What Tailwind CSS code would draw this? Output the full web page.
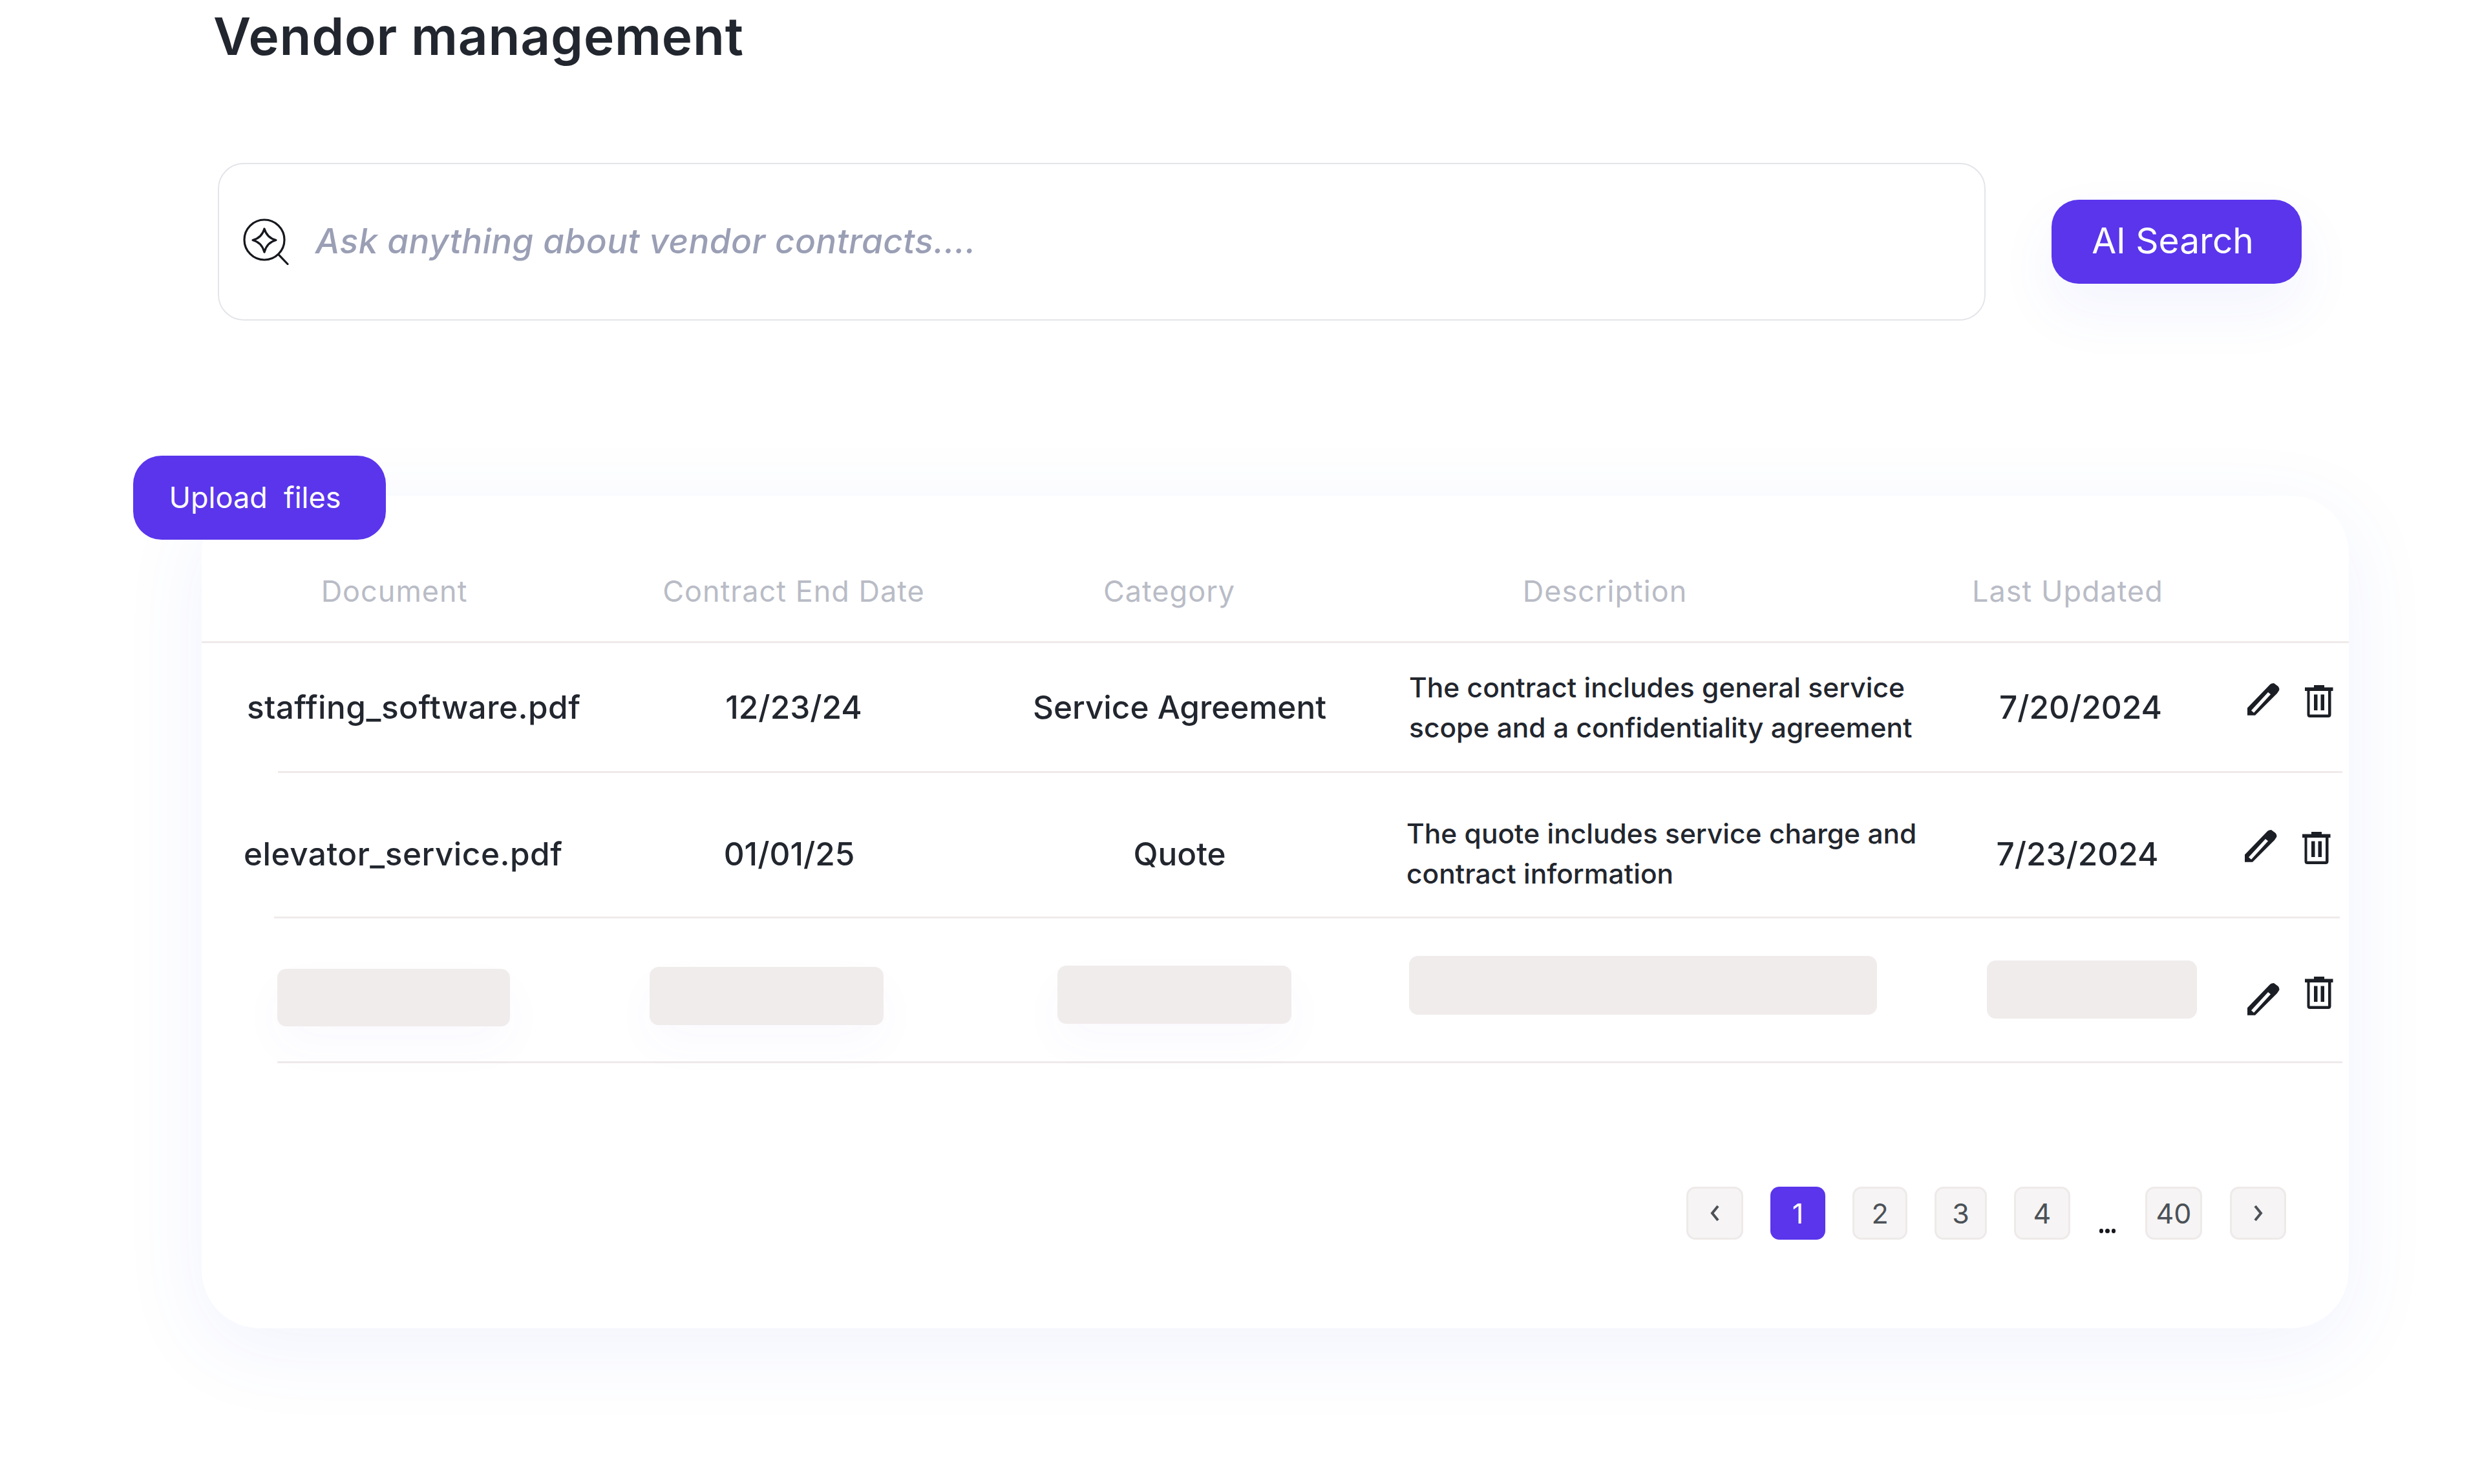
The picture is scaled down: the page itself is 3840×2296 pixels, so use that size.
<!DOCTYPE html>
<html lang="en">
<head>
  <meta charset="UTF-8">
  <title>Vendor management</title>
  <script src="https://cdn.jsdelivr.net/npm/@tailwindcss/browser@4"></script>
</head>
<body class="w-[3840px] h-[2296px] overflow-hidden bg-white font-['Inter',sans-serif] text-[#22262e]">

  <!-- title -->
  <h1 class="ml-[330px] h-[252px] pt-[8px] text-[80px] leading-[96px] font-semibold tracking-[0.8px]">Vendor management</h1>

  <!-- search -->
  <div class="flex items-center h-[244px] ml-[337px]">
    <div class="flex items-center w-[2735px] h-[244px] pl-[36px] border-2 border-[#e4e5ea] rounded-[40px] bg-white">
      <svg class="w-[72px] h-[72px] mr-[41px] shrink-0" viewBox="0 0 72 72" fill="none" stroke="#16181d" stroke-width="3.2" stroke-linecap="round" stroke-linejoin="round">
        <circle cx="34" cy="33" r="31"/>
        <path d="M56.7 56.7L70 70.5"/>
        <path d="M34 16Q38 30 52 33.5Q38 37 34 52Q30 37 16 33.5Q30 30 34 16Z"/>
      </svg>
      <span class="text-[53px] font-medium italic text-[#9a9fb5] tracking-[0.4px]">Ask anything about vendor contracts....</span>
    </div>
    <button class="ml-[102px] w-[387px] h-[130px] rounded-[42px] bg-[#5a35ec] text-white text-[55px] pr-[12px] pb-[4px] shadow-[0_40px_90px_rgba(90,100,240,0.07)]">AI Search</button>
  </div>

  <!-- table card -->
  <div class="relative ml-[312px] mt-[271px] w-[3322px] h-[1288px] rounded-[90px] bg-white shadow-[0_30px_130px_rgba(80,100,230,0.08)]">
    <button class="absolute left-[-106px] top-[-62px] w-[391px] h-[130px] rounded-[44px] bg-[#5a35ec] text-white text-[45px] whitespace-pre pr-[14px]">Upload  files</button>

    <!-- header -->
    <div class="grid grid-cols-[596px_640px_522px_826px_606px] items-center h-[228px] pt-[70px] border-b-[3px] border-[#f0eaeb] text-[45px] tracking-[1px] text-[#b9bcc6] text-center">
      <div>Document</div>
      <div>Contract End Date</div>
      <div>Category</div>
      <div>Description</div>
      <div>Last Updated</div>
    </div>

    <!-- row 1 -->
    <div class="flex items-center h-[198px] pt-[1px] text-[49.5px] font-medium">
      <div class="w-[596px] pl-[70px] whitespace-nowrap tracking-[0.5px]">staffing_software.pdf</div>
      <div class="w-[640px] text-center">12/23/24</div>
      <div class="w-[522px] pl-[32px] text-center whitespace-nowrap">Service Agreement</div>
      <div class="w-[826px] pl-[110px] text-[42.5px] leading-[62px] whitespace-nowrap">The contract includes general service<br>scope and a confidentiality agreement</div>
      <div class="w-[574px] pl-[72px] text-center">7/20/2024</div>
      <div class="flex items-start pl-[7px] gap-[39px] -mt-[22px]">
        <svg class="w-[50px] h-[50px]" viewBox="0 0 50 50" fill="#1b1e24" fill-rule="evenodd"><path d="M0 38.3L35.3 1.7Q37 0 41 0L47.7 5Q50 8 49.3 10.7L46 15.7L12 49.7H0ZM6 42.3L10 45.7L36 17.3L32 14Z"/></svg>
        <svg class="w-[44px] h-[50px] mt-[3px]" viewBox="0 0 44 50" fill="#1b1e24"><path d="M14 0H30V3.5H43.5V9H40.5V45.5Q40.5 50 36 50H8Q3.5 50 3.5 45.5V9H0V3.5H14ZM7.5 9V45.5H36V9ZM14 14.5H19.5V39H14ZM24.5 14.5H30V39H24.5Z"/></svg>
      </div>
    </div>
    <div class="h-[3px] ml-[118px] w-[3194px] bg-[#f0eaeb]"></div>

    <!-- row 2 -->
    <div class="flex items-center h-[222px] pt-[28px] text-[49.5px] font-medium">
      <div class="w-[596px] pl-[65px] whitespace-nowrap tracking-[0.5px]">elevator_service.pdf</div>
      <div class="w-[640px] pr-[14px] text-center">01/01/25</div>
      <div class="w-[522px] pl-[32px] text-center">Quote</div>
      <div class="w-[826px] pl-[106px] text-[42.5px] leading-[62px] whitespace-nowrap">The quote includes service charge and<br>contract information</div>
      <div class="w-[574px] pl-[62px] text-center">7/23/2024</div>
      <div class="flex items-start pl-[3px] gap-[39px] -mt-[22px]">
        <svg class="w-[50px] h-[50px]" viewBox="0 0 50 50" fill="#1b1e24" fill-rule="evenodd"><path d="M0 38.3L35.3 1.7Q37 0 41 0L47.7 5Q50 8 49.3 10.7L46 15.7L12 49.7H0ZM6 42.3L10 45.7L36 17.3L32 14Z"/></svg>
        <svg class="w-[44px] h-[50px] mt-[3px]" viewBox="0 0 44 50" fill="#1b1e24"><path d="M14 0H30V3.5H43.5V9H40.5V45.5Q40.5 50 36 50H8Q3.5 50 3.5 45.5V9H0V3.5H14ZM7.5 9V45.5H36V9ZM14 14.5H19.5V39H14ZM24.5 14.5H30V39H24.5Z"/></svg>
      </div>
    </div>
    <div class="h-[3px] ml-[112px] w-[3196px] bg-[#f0eaeb]"></div>

    <!-- row 3, empty placeholders -->
    <div class="flex items-start h-[221px]">
      <div class="ml-[117px] mt-[78px] w-[360px] h-[89px] rounded-[14px] bg-[#f1ecec] shadow-[0_30px_70px_rgba(90,100,240,0.03)]"></div>
      <div class="ml-[216px] mt-[75px] w-[362px] h-[90px] rounded-[14px] bg-[#f1ecec] shadow-[0_30px_70px_rgba(90,100,240,0.03)]"></div>
      <div class="ml-[269px] mt-[73px] w-[362px] h-[90px] rounded-[14px] bg-[#f1ecec] shadow-[0_30px_70px_rgba(90,100,240,0.03)]"></div>
      <div class="ml-[182px] mt-[58px] w-[724px] h-[91px] rounded-[14px] bg-[#f1ecec]"></div>
      <div class="ml-[170px] mt-[65px] w-[325px] h-[90px] rounded-[14px] bg-[#f1ecec]"></div>
      <svg class="ml-[78px] mt-[100px] w-[50px] h-[50px]" viewBox="0 0 50 50" fill="#1b1e24" fill-rule="evenodd"><path d="M0 38.3L35.3 1.7Q37 0 41 0L47.7 5Q50 8 49.3 10.7L46 15.7L12 49.7H0ZM6 42.3L10 45.7L36 17.3L32 14Z"/></svg>
      <svg class="ml-[39px] mt-[90px] w-[44px] h-[50px]" viewBox="0 0 44 50" fill="#1b1e24"><path d="M14 0H30V3.5H43.5V9H40.5V45.5Q40.5 50 36 50H8Q3.5 50 3.5 45.5V9H0V3.5H14ZM7.5 9V45.5H36V9ZM14 14.5H19.5V39H14ZM24.5 14.5H30V39H24.5Z"/></svg>
    </div>
    <div class="h-[3px] ml-[117px] w-[3195px] bg-[#f0eaeb]"></div>

    <!-- pagination -->
    <div class="flex items-center gap-[42px] ml-[2297px] mt-[191px] h-[82px] text-[43px] text-[#4b5157]">
      <div class="flex items-center justify-center w-[88px] h-[82px] rounded-[14px] bg-[#f6f4f4] border-[3px] border-[#efeaea]">
        <svg class="w-[16px] h-[26px]" viewBox="0 0 16 26" fill="none" stroke="#4b5157" stroke-width="4"><path d="M13 2L4 13L13 24"/></svg>
      </div>
      <div class="flex items-center justify-center w-[85px] h-[82px] rounded-[14px] bg-[#5a35ec] text-white">1</div>
      <div class="flex items-center justify-center w-[85px] h-[82px] rounded-[14px] bg-[#f6f4f4] border-[3px] border-[#efeaea]">2</div>
      <div class="flex items-center justify-center w-[81px] h-[82px] rounded-[14px] bg-[#f6f4f4] border-[3px] border-[#efeaea]">3</div>
      <div class="flex items-center justify-center w-[87px] h-[82px] rounded-[14px] bg-[#f6f4f4] border-[3px] border-[#efeaea]">4</div>
      <div class="flex items-end justify-center gap-[3px] ml-[3px] w-[25px] h-[62px]">
        <span class="w-[7px] h-[7px] rounded-full bg-[#16181d]"></span>
        <span class="w-[7px] h-[7px] rounded-full bg-[#16181d]"></span>
        <span class="w-[7px] h-[7px] rounded-full bg-[#16181d]"></span>
      </div>
      <div class="flex items-center justify-center ml-[4px] w-[88px] h-[82px] rounded-[14px] bg-[#f6f4f4] border-[3px] border-[#efeaea]">40</div>
      <div class="flex items-center justify-center ml-[1px] w-[87px] h-[82px] rounded-[14px] bg-[#f6f4f4] border-[3px] border-[#efeaea]">
        <svg class="w-[16px] h-[26px]" viewBox="0 0 16 26" fill="none" stroke="#4b5157" stroke-width="4"><path d="M3 2L12 13L3 24"/></svg>
      </div>
    </div>
  </div>

</body>
</html>
